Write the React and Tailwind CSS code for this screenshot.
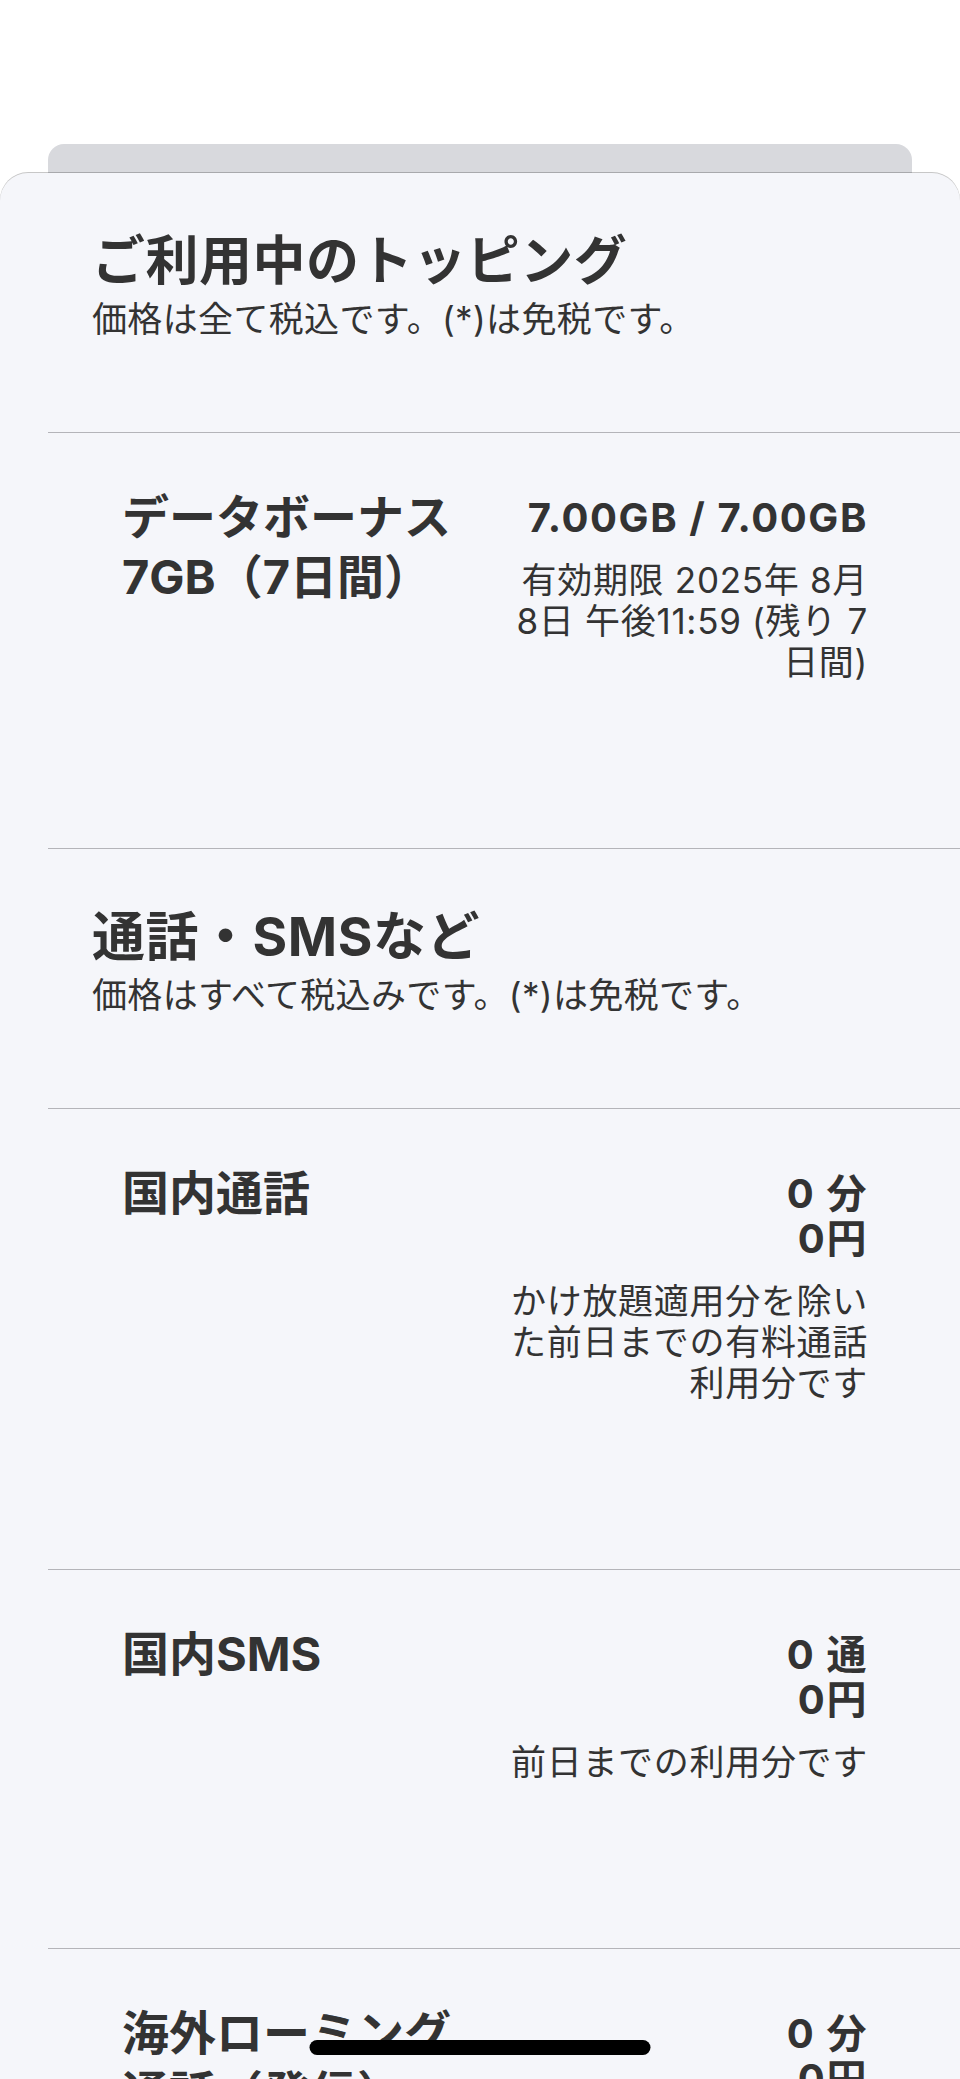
import React from 'react';

const FONT = "font-['Inter','Noto_Sans_CJK_JP',sans-serif]";

function Divider() {
  return <div className="ml-[48px] h-px bg-[#b4b4b9]" />;
}

function SectionHeader({ title, sub }) {
  return (
    <div className="pl-[92px] pr-[48px] pt-[57px] pb-[92px]">
      <h2 className="text-[53px] leading-[62px] font-bold tracking-[0.01em]">{title}</h2>
      <p className="mt-[6px] text-[35px] leading-[42px] tracking-[0.01em]">{sub}</p>
    </div>
  );
}

function Lines({ items }) {
  return items.map((t, i) => (
    <React.Fragment key={t}>
      {i > 0 && <br />}
      <span className="whitespace-nowrap">{t}</span>
    </React.Fragment>
  ));
}

function UsageRow({ title, value, note }) {
  return (
    <div className="flex gap-[24px] pl-[122px] pr-[92px] pt-[54px] pb-[165px]">
      <div className="flex-1 text-[47px] leading-[60px] font-bold">
        <Lines items={title} />
      </div>
      <div className="w-[370px] pt-[8px] text-right">
        <div className="text-[40px] leading-[45px] font-bold tracking-[0.04em]">
          <Lines items={value} />
        </div>
        {note && (
          <div className="mt-[20px] text-[35px] leading-[41px] tracking-[0.02em]">
            <Lines items={note} />
          </div>
        )}
      </div>
    </div>
  );
}

export default function App() {
  return (
    <div className={`${FONT} min-h-screen bg-white pt-[144px] text-[#333333] overflow-hidden`}>
      {/* card behind */}
      <div className="mx-[48px] h-[40px] rounded-t-[16px] bg-[#d8d9dd]" />

      {/* main sheet */}
      <div className="relative -mt-[11px] rounded-t-[28px] bg-[#f5f6fa] shadow-[0_-1px_0_rgba(0,0,0,0.22)]">
        <SectionHeader title="ご利用中のトッピング" sub="価格は全て税込です。(*)は免税です。" />
        <Divider />
        <UsageRow
          title={['データボーナス', '7GB（7日間）']}
          value={['7.00GB / 7.00GB']}
          note={['有効期限 2025年 8月', '8日 午後11:59 (残り 7', '日間)']}
        />
        <Divider />
        <SectionHeader title="通話・SMSなど" sub="価格はすべて税込みです。(*)は免税です。" />
        <Divider />
        <UsageRow
          title={['国内通話']}
          value={['0 分', '0円']}
          note={['かけ放題適用分を除い', 'た前日までの有料通話', '利用分です']}
        />
        <Divider />
        <UsageRow title={['国内SMS']} value={['0 通', '0円']} note={['前日までの利用分です']} />
        <Divider />
        <UsageRow title={['海外ローミング', '通話（発信）']} value={['0 分', '0円']} />
      </div>

      {/* home indicator */}
      <div className="fixed bottom-[24px] left-1/2 h-[15px] w-[341px] -translate-x-1/2 rounded-full bg-black" />
    </div>
  );
}
